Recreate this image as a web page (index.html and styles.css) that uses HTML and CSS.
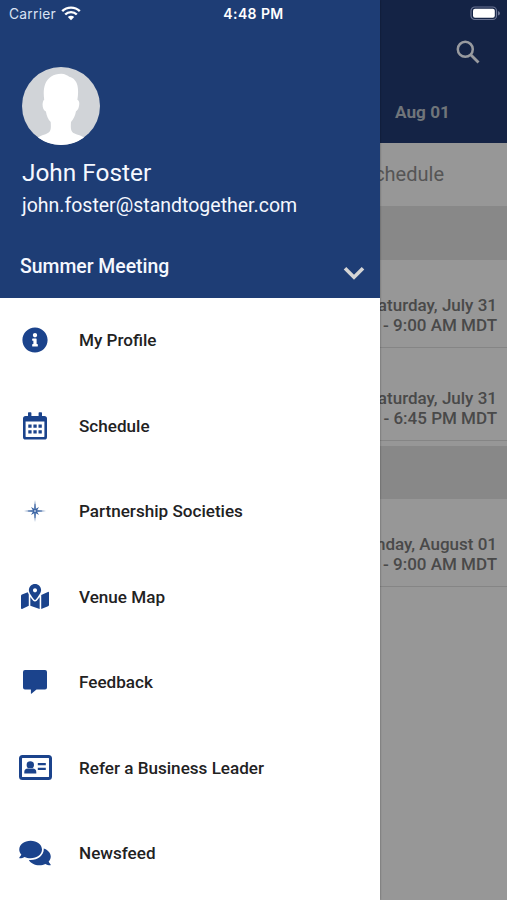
FILE: index.html
```html
<!DOCTYPE html>
<html lang="en">
<head>
    <meta charset="UTF-8">
    <meta name="viewport" content="width=device-width, initial-scale=1.0">
    <title>Summer Meeting</title>
    <link rel="stylesheet" href="styles.css">
</head>
<body>
    <div class="app">
        <div class="status">
            <span class="carrier">Carrier</span>
            <svg class="wifi" viewBox="0 0 20 15">
                <path d="M1.200 5.200a12.500 12.500 0 0 1 17.600 0M4.200 8.500a8.200 8.200 0 0 1 11.600 0" fill="none" stroke="#fff" stroke-width="2.400"/>
                <path d="M6.800 11a4.600 4.600 0 0 1 6.400 0L10 14.300z" fill="#fff"/>
            </svg>
            <span class="clock">4:48 PM</span>
            <svg class="battery" viewBox="0 0 31 15">
                <rect x="1" y="1" width="25.5" height="12.5" rx="3.8" fill="none" stroke="#6b7594" stroke-width="1.2"/>
                <rect x="3" y="2.8" width="21.8" height="9" rx="2" fill="#fff"/>
                <path d="M28 5v4.6q2-.7 2-2.3T28 5z" fill="#6b7594"/>
            </svg>
        </div>

        <aside class="drawer">
            <header class="profile">
                <svg class="avatar" viewBox="0 0 78 78">
                    <circle cx="39" cy="39" r="39" fill="#d1d4d8"/>
                    <path d="M16 70.500c3-2.500 9-3 11.300-5.500 2-2.300 1.600-6 1.400-10-2.600-2.600-4-6-4.800-10.500-2.600-1-3.700-5-3.200-8.500.3-2 1-3 1.500-3.300-.7-5-.8-11 1-15.700 2.500-6.500 8.300-10.300 16-10.300 4 0 6.500 2 8 3 4.500 1 7.300 4.500 8.300 9 .9 4 .7 9-.1 14 1 .3 1.900 1.600 1.900 3.600 0 3.500-1.200 7-3.300 8-.8 4.500-2.500 8.200-5 10.700-.2 4-.6 7.700 1.300 10 2.300 2.600 8.700 3 11.700 5.500A39 39 0 0 1 39 78a39 39 0 0 1-23-7.500z" fill="#fff"/>
                </svg>
                <div class="name">John Foster</div>
                <div class="email">john.foster@standtogether.com</div>
                <div class="event">
                    <span>Summer Meeting</span>
                    <svg class="chevron" viewBox="0 0 22 14"><path d="M2 2.200l9 9 9-9" fill="none" stroke="#d5d5d5" stroke-width="3.600"/></svg>
                </div>
            </header>

            <nav class="menu">
                <a class="item">
                    <span class="icon"><svg width="26" height="26" viewBox="0 0 512 512"><path d="M256 8C119.043 8 8 119.083 8 256c0 136.997 111.043 248 248 248s248-111.003 248-248C504 119.083 392.957 8 256 8zm0 110c23.196 0 42 18.804 42 42s-18.804 42-42 42-42-18.804-42-42 18.804-42 42-42zm56 254c0 6.627-5.373 12-12 12h-88c-6.627 0-12-5.373-12-12v-24c0-6.627 5.373-12 12-12h12v-64h-12c-6.627 0-12-5.373-12-12v-24c0-6.627 5.373-12 12-12h64c6.627 0 12 5.373 12 12v100h12c6.627 0 12 5.373 12 12v24z"/></svg></span>
                    <span>My Profile</span>
                </a>
                <a class="item">
                    <span class="icon"><svg width="24" height="28" viewBox="0 0 24 28"><path fill-rule="evenodd" d="M5 1q0-.7.700-.7h2q.7 0 .7.700v3h7.200V1q0-.7.700-.7h2q.7 0 .7.700v3h2.200Q24 4 24 6.600v18.300q0 2.600-2.600 2.600H2.600Q0 27.500 0 24.900V6.600Q0 4 2.600 4H5zM2.600 9.400v15.100q0 .4.400.4h18q.4 0 .4-.4V9.400z"/><path d="M5.300 12.600h3.300v3.200H5.300zM10.400 12.600h3.300v3.200h-3.300zM15.500 12.600h3.300v3.200h-3.300zM5.300 18.200h3.300v3.200H5.300zM10.400 18.200h3.300v3.200h-3.300zM15.500 18.200h3.300v3.200h-3.300z"/></svg></span>
                    <span>Schedule</span>
                </a>
                <a class="item">
                    <span class="icon"><svg width="22" height="22" viewBox="0 0 22 22"><path d="M11 0l1.300 9.700L22 11l-9.700 1.300L11 22l-1.300-9.700L0 11l9.700-1.300z" fill="#6f8db8"/><path d="M7 7l4 2.300L15 7l-2.300 4 2.300 4-4-2.300L7 15l2.300-4z" fill="#3862a2"/><path d="M11 4v14M4 11h14" stroke="#4a70ac" stroke-width=".8"/><circle cx="11" cy="11" r="1" fill="#b9c9e2"/></svg></span>
                    <span>Partnership Societies</span>
                </a>
                <a class="item">
                    <span class="icon"><svg width="28" height="25" viewBox="0 0 576 512"><path d="M288 0c-69.590 0-126 56.410-126 126 0 56.260 82.350 158.800 113.900 196.020 6.390 7.540 17.820 7.540 24.200 0C331.650 284.800 414 182.260 414 126 414 56.410 357.590 0 288 0zm0 168c-23.200 0-42-18.800-42-42s18.800-42 42-42 42 18.800 42 42-18.800 42-42 42zM20.120 215.950A32.006 32.006 0 0 0 0 245.660v250.320c0 11.320 11.430 19.060 21.940 14.860L160 448V214.920c-8.840-15.980-16.070-31.540-21.250-46.420L20.120 215.950zM288 359.670c-14.070 0-27.380-6.180-36.510-16.960-19.660-23.200-40.570-49.620-59.490-76.720v182l192 64V266c-18.920 27.090-39.820 53.520-59.490 76.720-9.130 10.770-22.440 16.950-36.510 16.950zm266.060-198.510L416 224v288l139.880-55.950A31.996 31.996 0 0 0 576 426.340V176.020c0-11.320-11.430-19.060-21.940-14.860z"/></svg></span>
                    <span>Venue Map</span>
                </a>
                <a class="item">
                    <span class="icon"><svg width="24" height="24" viewBox="0 0 24 24"><path d="M2 0h20q2 0 2 2v15.500q0 2-2 2h-8.500L8.700 23.600q-.8.600-.8-.4v-3.700H2q-2 0-2-2V2q0-2 2-2z"/></svg></span>
                    <span>Feedback</span>
                </a>
                <a class="item">
                    <span class="icon"><svg width="33" height="25" viewBox="0 0 33 25"><rect x="1.500" y="1.500" width="30" height="22" rx="2" fill="none" stroke="#1b438c" stroke-width="3"/><circle cx="11.300" cy="9.900" r="3.700"/><path d="M5.300 18.400v-1.300q0-3.600 3.700-3.600 2.300 1 4.600 0 3.700 0 3.700 3.600v1.300zM18.800 8h8v2.200h-8zM18.800 12.800h8V15h-8z"/></svg></span>
                    <span>Refer a Business Leader</span>
                </a>
                <a class="item">
                    <span class="icon"><svg width="32" height="28" viewBox="0 0 576 512"><path d="M416 192c0-88.400-93.100-160-208-160S0 103.600 0 192c0 34.300 14.100 65.900 38 92-13.400 30.200-35.500 54.200-35.800 54.500-2.200 2.300-2.800 5.700-1.500 8.700S4.800 352 8 352c36.600 0 66.900-12.300 88.700-25 32.200 15.700 70.300 25 111.300 25 114.900 0 208-71.600 208-160zm122 220c23.900-26 38-57.700 38-92 0-66.900-53.500-124.200-129.300-148.100.9 6.600 1.300 13.300 1.300 20.100 0 105.900-107.700 192-240 192-10.800 0-21.300-.8-31.700-1.900C207.800 439.600 281.800 480 368 480c41 0 79.100-9.200 111.300-25 21.800 12.700 52.100 25 88.700 25 3.200 0 6.100-1.900 7.300-4.800 1.300-2.900.7-6.300-1.500-8.700-.3-.3-22.400-24.200-35.800-54.500z"/></svg></span>
                    <span>Newsfeed</span>
                </a>
            </nav>
        </aside>

        <main class="page">
            <div class="topbar">
                <svg class="search" viewBox="0 0 24 24"><circle cx="9.300" cy="9.300" r="7.500" fill="none" stroke="#989a9f" stroke-width="2.500"/><path d="M14.500 14.500l8 8" stroke="#989a9f" stroke-width="2.800"/></svg>
                <div class="date">Aug 01</div>
            </div>
            <div class="tab"><span>Schedule</span></div>
            <div class="band"></div>
            <div class="session"><span>Saturday, July 31</span><span>- 9:00 AM MDT</span></div>
            <div class="session second"><span>Saturday, July 31</span><span>- 6:45 PM MDT</span></div>
            <div class="band gap"></div>
            <div class="session third"><span>Sunday, August 01</span><span>- 9:00 AM MDT</span></div>
        </main>
    </div>
</body>
</html>
```

FILE: styles.css
```css
* {
    box-sizing: border-box;
}
body {
    margin: 0;
    font-family: Roboto, "Liberation Sans", sans-serif;
    background: #979797;
}
svg {
    display: block;
    flex: none;
}
.app {
    position: relative;
    display: flex;
    width: 507px;
    height: 900px;
    overflow: hidden;
}

/* status bar lies over the drawer and the page */
.status {
    position: absolute;
    z-index: 2;
    top: 0;
    left: 0;
    width: 100%;
    height: 27px;
    padding: 0 6px 0 9px;
    display: grid;
    grid-template-columns: 47px 20px 1fr 75px;
    align-items: center;
    column-gap: 5px;
    color: #fff;
    font-family: Inter, sans-serif;
}
.carrier {
    color: #d9e2f3;
    font-size: 13.8px;
    letter-spacing: 0.25px;
}
.wifi {
    width: 20px;
    height: 15px;
}
.clock {
    font-weight: 600;
    text-align: center;
    font-size: 14px;
    letter-spacing: 0.4px;
}
.battery {
    width: 31px;
    height: 15px;
    justify-self: end;
}

.drawer {
    position: relative;
    z-index: 1;
    flex: none;
    width: 380px;
    background: #fff;
    box-shadow: 0 0 2px rgba(0, 0, 0, 0.4);
}
.profile {
    height: 297.5px;
    padding: 67px 15px 0 21px;
    background: #1e3d75;
    color: #f5f8ff;
}
.avatar {
    width: 78px;
    height: 78px;
    margin-left: 1px;
}
.name {
    margin: 13px 0 0 1px;
    font-size: 24.4px;
    line-height: 30px;
}
.email {
    margin: 5px 0 0 1px;
    font-size: 19.5px;
    line-height: 26px;
}
.event {
    display: flex;
    justify-content: space-between;
    margin-top: 34px;
    font-size: 19.4px;
    font-weight: 500;
    line-height: 28px;
}
.event span {
    margin-left: -1px;
}
.chevron {
    width: 22px;
    height: 14px;
    margin-top: 13px;
}

.item {
    display: flex;
    align-items: center;
    height: 85.5px;
    font-size: 17.1px;
    font-weight: 500;
    color: #22221f;
}
.icon {
    display: flex;
    justify-content: center;
    width: 70px;
    margin-right: 9px;
    fill: #1b438c;
}

/* page dimmed behind the drawer */
.page {
    flex: 1;
    min-width: 0;
    overflow: hidden;
    background: #979797;
    color: #494949;
}
.topbar {
    display: flex;
    flex-direction: column;
    height: 142.5px;
    padding: 40px 27px 0 15px;
    background: #142345;
}
.search {
    width: 24px;
    height: 24px;
    align-self: flex-end;
}
.date {
    margin-top: 37px;
    font-size: 17.2px;
    font-weight: 700;
    line-height: 22px;
    color: #70757a;
}
.tab {
    display: flex;
    align-items: center;
    justify-content: flex-end;
    height: 63.5px;
    padding-right: 63px;
    font-size: 20px;
    color: #555;
}
.band {
    height: 54px;
    background: #888;
}
.session {
    display: flex;
    flex-direction: column;
    align-items: flex-end;
    height: 88px;
    padding: 35px 10px 0 0;
    border-bottom: 1px solid #858585;
    font-size: 17px;
    font-weight: 500;
    line-height: 20px;
    white-space: nowrap;
}
.second {
    height: 93px;
    padding-top: 40px;
}
.gap {
    height: 53px;
    margin-top: 5px;
}
.third {
    height: 88px;
}
```
